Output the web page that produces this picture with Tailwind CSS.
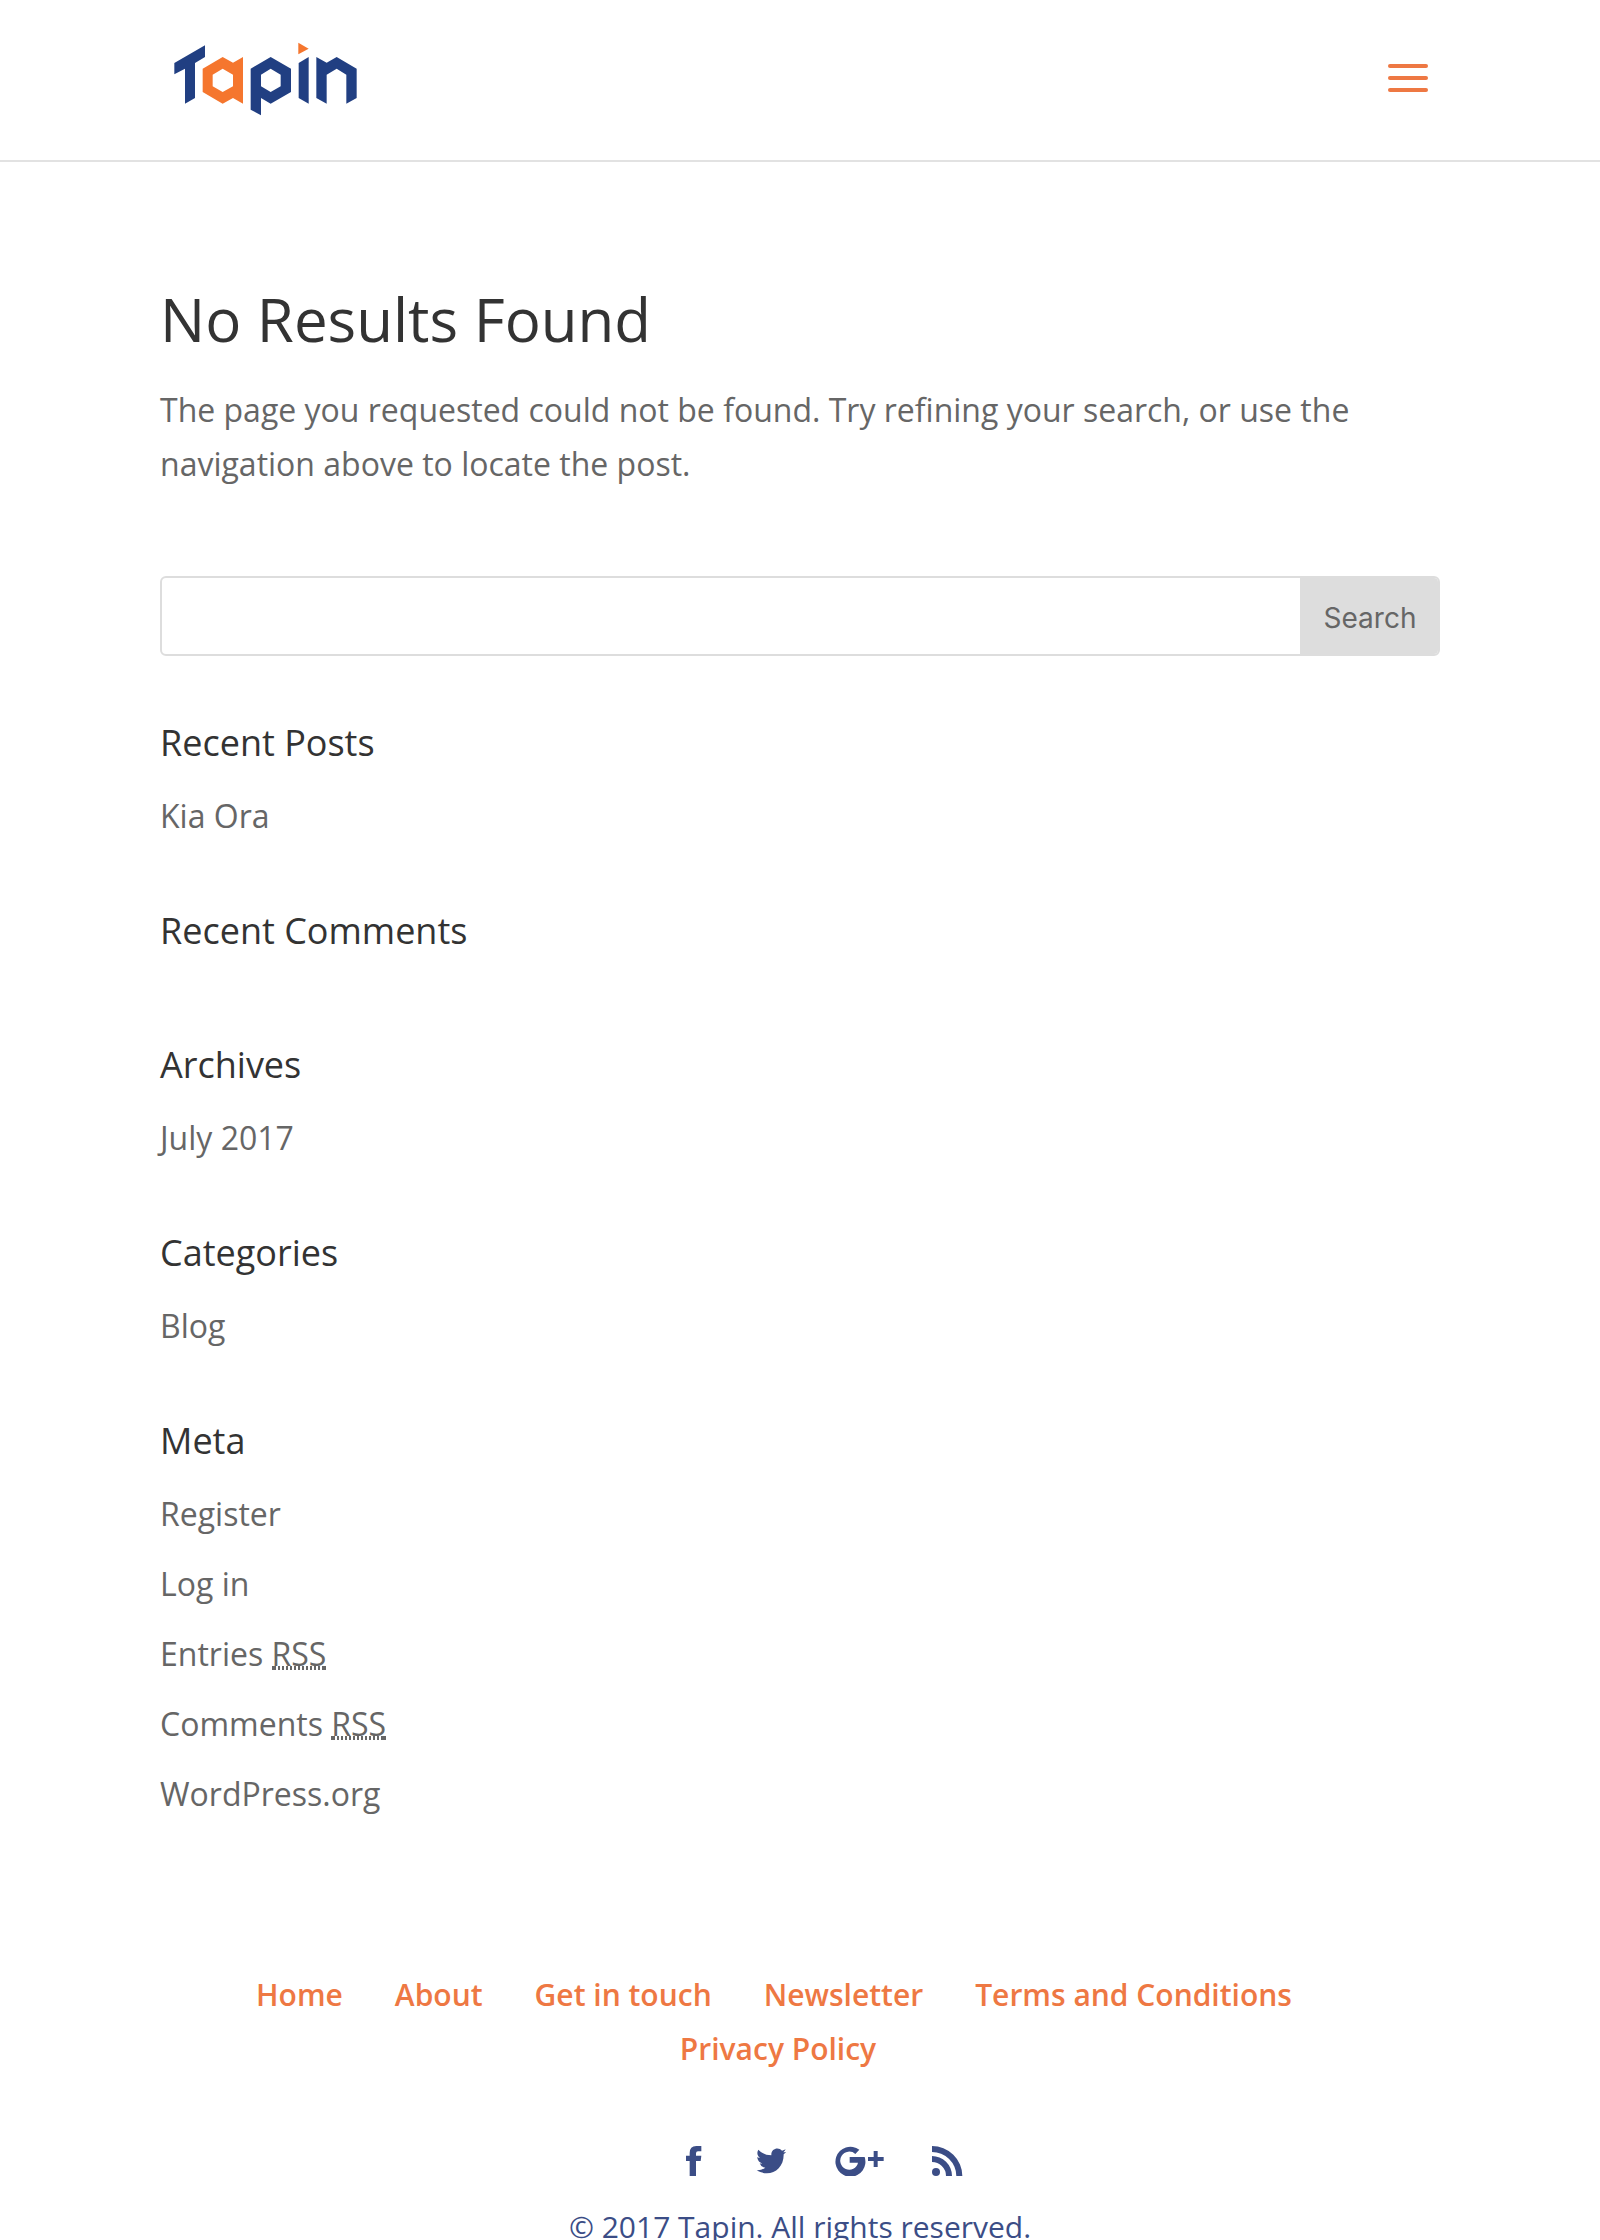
<!DOCTYPE html>
<html lang="en">
<head>
<meta charset="utf-8">
<meta name="viewport" content="width=device-width, initial-scale=1">
<title>Page not found | Tapin</title>
<script src="https://cdn.jsdelivr.net/npm/@tailwindcss/browser@4"></script>
</head>
<body class="bg-white font-['Open_Sans',sans-serif] text-[32px] leading-[54px] text-[#666]">
<header class="border-b-2 border-[#e2e2e2]">
  <div class="mx-auto flex h-40 w-4/5 items-start justify-between pt-10">
    <a href="#" aria-label="Tapin" class="ml-[10px]">
      <svg class="h-20 w-[190px]" viewBox="60 30 570 240" aria-hidden="true">
        <g fill="#213f82">
          <path d="M73 99 165 46V81L135 99V204L105 221V116L73 133Z"/>
          <path fill-rule="evenodd" d="M302 116 362 81 423 116V186L362 221 333 204V256L302 239ZM333 134 362 116 392 134V169L362 186 333 169Z"/>
          <path d="M446 99 476 81V221L446 204Z"/>
          <path d="M499 81 530 98 560 81 620 116V204L589 221V134L560 116 530 134V221L499 204Z"/>
        </g>
        <g fill="#f5762e">
          <path fill-rule="evenodd" d="M158 116 218 81 249 98 279 81V221L249 204 218 221 158 186ZM188 134V169L218 186 249 169V134L218 116Z"/>
          <path d="M445 38 476 56 445 73Z"/>
        </g>
      </svg>
    </a>
    <button type="button" aria-label="Open menu" class="mt-6 mr-3 flex flex-col gap-2">
      <span class="h-1 w-10 rounded-xs bg-[#ee7843]"></span>
      <span class="h-1 w-10 rounded-xs bg-[#ee7843]"></span>
      <span class="h-1 w-10 rounded-xs bg-[#ee7843]"></span>
    </button>
  </div>
</header>

<main class="mx-auto w-4/5 pt-[127px]">
  <h1 class="text-[60px] leading-[60px] text-[#333]">No Results Found</h1>
  <p class="mt-[34px]">The page you requested could not be found. Try refining your search, or use the navigation above to locate the post.</p>

  <aside class="mt-[85px]">
    <form role="search" class="flex h-20 overflow-hidden rounded-md border-2 border-[#ddd]">
      <input type="text" aria-label="Search for" class="min-w-0 flex-1 px-4 text-[28px] outline-none">
      <button type="submit" class="w-[138px] bg-[#ddd] pt-1 pl-0.5 font-['Inter',sans-serif] text-[28px] leading-10">Search</button>
    </form>

    <div class="mt-[69px] flex flex-col gap-[70px]">
      <section>
        <h2 class="pb-7 text-[36px] leading-9 text-[#333]">Recent Posts</h2>
        <ul class="space-y-4"><li><a href="#">Kia Ora</a></li></ul>
      </section>
      <section>
        <h2 class="pb-7 text-[36px] leading-9 text-[#333]">Recent Comments</h2>
        <ul></ul>
      </section>
      <section>
        <h2 class="pb-7 text-[36px] leading-9 text-[#333]">Archives</h2>
        <ul class="space-y-4"><li><a href="#">July 2017</a></li></ul>
      </section>
      <section>
        <h2 class="pb-7 text-[36px] leading-9 text-[#333]">Categories</h2>
        <ul class="space-y-4"><li><a href="#">Blog</a></li></ul>
      </section>
      <section>
        <h2 class="pb-7 text-[36px] leading-9 text-[#333]">Meta</h2>
        <ul class="space-y-4">
          <li><a href="#">Register</a></li>
          <li><a href="#">Log in</a></li>
          <li><a href="#">Entries <abbr title="Really Simple Syndication" class="no-underline [background:linear-gradient(#666,#666)_left_bottom_5px/4px_4px_no-repeat,linear-gradient(#666,#666)_right_bottom_5px/4px_4px_no-repeat,linear-gradient(90deg,transparent_50%,#666_50%)_left_bottom_5px/4px_4px_repeat-x]">RSS</abbr></a></li>
          <li><a href="#">Comments <abbr title="Really Simple Syndication" class="no-underline [background:linear-gradient(#666,#666)_left_bottom_5px/4px_4px_no-repeat,linear-gradient(#666,#666)_right_bottom_5px/4px_4px_no-repeat,linear-gradient(90deg,transparent_50%,#666_50%)_left_bottom_5px/4px_4px_repeat-x]">RSS</abbr></a></li>
          <li><a href="#">WordPress.org</a></li>
        </ul>
      </section>
    </div>
  </aside>
</main>

<footer class="mx-auto mt-[147px] w-4/5 text-center text-[30px] text-[#3b4d86]">
  <nav aria-label="Footer">
    <ul class="flex flex-wrap justify-center font-semibold text-[#ee7843]">
      <li class="pr-[52px]"><a href="#">Home</a></li>
      <li class="pr-[52px]"><a href="#">About</a></li>
      <li class="pr-[52px]"><a href="#">Get in touch</a></li>
      <li class="pr-[52px]"><a href="#">Newsletter</a></li>
      <li class="pr-[52px]"><a href="#">Terms and Conditions</a></li>
      <li class="pr-11"><a href="#">Privacy Policy</a></li>
    </ul>
  </nav>
  <ul class="mt-[70px] flex justify-center gap-12 pl-[50px]">
    <li><a href="#" aria-label="Facebook" class="block"><svg class="h-[30px] w-[22px]" viewBox="107 78 66 90" fill="currentColor"><path d="M118 168V123H107V107H118V99Q118 78 138 78H153V94H143Q137 94 137 100V107H153L151 123H137V168Z"/></svg></a></li>
    <li><a href="#" aria-label="Twitter" class="block"><svg class="h-[30px] w-[30px]" viewBox="318 78 90 90" fill="currentColor"><path d="M410 94Q405 97 400 97Q405 93 407 88Q402 91 396 92C385 80 363 86 364 106Q341 106 325 89C319 99 323 109 330 114Q326 114 322 111C322 121 329 128 337 130Q333 131 329 130Q333 142 346 143Q335 152 320 151C358 174 402 151 401 103Q406 99 410 94Z"/></svg></a></li>
    <li><a href="#" aria-label="Google Plus" class="block"><svg class="h-[30px] w-[50px]" viewBox="553 78 150 90" fill="currentColor"><path d="M629 89A45 45 0 1 0 645 111H600V128H625A27 27 0 1 1 617 102Z"/><path d="M672 93H684V111H702V123H684V141H672V123H655V111H672Z"/></svg></a></li>
    <li><a href="#" aria-label="RSS" class="block"><svg class="h-[30px] w-8" viewBox="845 78 96 90" fill="currentColor"><circle cx="857" cy="156" r="12"/><path d="M844 108A61 60 0 0 1 905 168H887A43 42 0 0 0 844 126Z"/><path d="M844 78A92 90 0 0 1 936 168H918A74 72 0 0 0 844 96Z"/></svg></a></li>
  </ul>
  <p class="mt-6">© 2017 Tapin. All rights reserved.</p>
</footer>
</body>
</html>
